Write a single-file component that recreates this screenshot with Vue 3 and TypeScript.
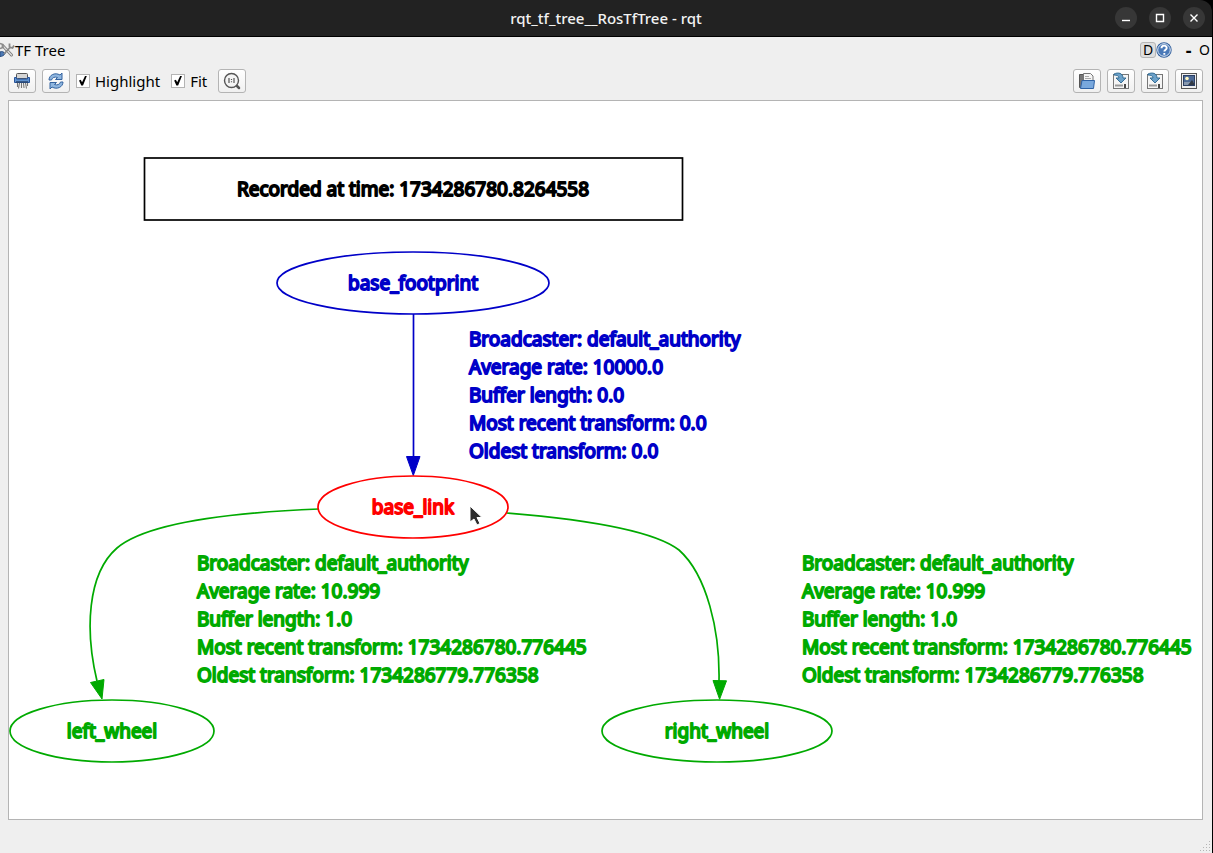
<script setup lang="ts">
import { ref } from 'vue'

interface Label { x: number; y: number; tone: string; lines: string[] }
interface TfNode { name: string; cx: number; cy: number; rx: number; tone: string }

const highlight = ref(true)
const fit = ref(true)

const nodes: TfNode[] = [
  { name: 'base_footprint', cx: 404, cy: 182, rx: 136, tone: 'blue' },
  { name: 'base_link', cx: 404, cy: 406, rx: 95, tone: 'red' },
  { name: 'left_wheel', cx: 103, cy: 630, rx: 102, tone: 'green' },
  { name: 'right_wheel', cx: 708, cy: 630, rx: 115, tone: 'green' },
]

const wheel = [
  'Broadcaster: default_authority',
  'Average rate: 10.999',
  'Buffer length: 1.0',
  'Most recent transform: 1734286780.776445',
  'Oldest transform: 1734286779.776358',
]

const labels: Label[] = [
  {
    x: 460, y: 245, tone: 'blue',
    lines: [
      'Broadcaster: default_authority',
      'Average rate: 10000.0',
      'Buffer length: 0.0',
      'Most recent transform: 0.0',
      'Oldest transform: 0.0',
    ],
  },
  { x: 188, y: 469, tone: 'green', lines: wheel },
  { x: 793, y: 469, tone: 'green', lines: wheel },
]
</script>

<template>
  <div class="window">
    <header class="titlebar">
      <span class="side"></span>
      <h1>rqt_tf_tree__RosTfTree - rqt</h1>
      <div class="side controls">
        <button aria-label="Minimize"><svg viewBox="0 0 22 22"><path d="M7 13.5h8" /></svg></button>
        <button aria-label="Maximize"><svg viewBox="0 0 22 22"><path d="M7.5 7.5h7v7h-7z" /></svg></button>
        <button aria-label="Close"><svg viewBox="0 0 22 22"><path d="M7.5 7.5l7 7M14.5 7.5l-7 7" /></svg></button>
      </div>
    </header>

    <div class="body">
      <div class="dock">
        <svg class="tools" width="15" height="18" viewBox="0 0 15 18" fill="none">
          <path d="M0 11c2-1 4 0 5 1.500c-1 2-3 3-5 3z" fill="#4c79b5" stroke="#2c4f80" />
          <path d="M3 5l8.500 9" stroke="#777" stroke-width="3" stroke-linecap="round" />
          <path d="M3 5l8.500 9" stroke="#ddd" stroke-width="1.300" stroke-linecap="round" />
          <path d="M10 6.500l-6 6.500M9.500 2.500v3.500l3 1 1.500-2.500" stroke="#888" stroke-width="1.800" />
          <path d="M0 2.500l3 1v3l-3 1" stroke="#888" stroke-width="1.500" />
        </svg>
        <span class="name">TF Tree</span>
        <button class="dbtn" aria-label="Dock options">D</button>
        <button class="flat" aria-label="Help">
          <svg width="16" height="16" viewBox="0 0 16 16">
            <circle cx="8" cy="8" r="7.700" fill="#2f5d9c" />
            <circle cx="8" cy="8" r="6.300" fill="#4a79b8" stroke="#dfe9f5" stroke-width="1" />
            <path d="M5.500 6.200c0-3.400 5.200-3.300 5.200-.3c0 1.700-2.400 1.800-2.400 3.700M8.300 11v1.800" fill="none" stroke="#fff" stroke-width="1.900" />
          </svg>
        </button>
        <button class="flat dash" aria-label="Minimize dock">-</button>
        <button class="flat" aria-label="Close dock">O</button>
      </div>

      <div class="toolbar">
        <button class="tool" aria-label="Clear buffer">
          <svg width="18" height="18" viewBox="0 0 18 18">
            <path d="M4.500 11v4M6.500 11l-1 5.500M8.500 11v5M10.500 11l.5 5M12.500 11l1 5.500M14.500 11v3" stroke="#777" stroke-width="1.100" />
            <rect x="3.500" y="1.500" width="11" height="5" rx="1" fill="#d5d5d5" stroke="#555" />
            <path d="M1.500 5.500h2v1.500h11V5.500h2v5h-15z" fill="#5f92cf" stroke="#28549a" />
            <path d="M3 10h12" stroke="#28456e" stroke-width="1.500" />
          </svg>
        </button>
        <button class="tool" aria-label="Refresh">
          <svg width="18" height="18" viewBox="0 0 18 18" stroke="#34639f" stroke-width="1" fill="#8fb6df">
            <path d="M2 8c0-5 6-8 11-5l2-2v6.500H8.500l2-2C8 4.500 5 5.500 4.500 8z" />
            <path d="M16 10c0 5-6 8-11 5l-2 2v-6.500h6.500l-2 2C10 13.500 13 12.500 13.500 10z" />
          </svg>
        </button>
        <label><input v-model="highlight" type="checkbox" />Highlight</label>
        <label><input v-model="fit" type="checkbox" />Fit</label>
        <button class="tool" aria-label="Fit in view">
          <svg width="18" height="18" viewBox="0 0 18 18" fill="none">
            <path d="M13.500 13.500l2.500 2.500" stroke="#555" stroke-width="2.500" stroke-linecap="round" />
            <circle cx="8.500" cy="8.500" r="7" fill="#f4f4f4" stroke="#555" stroke-width="1.400" />
            <path d="M6 6v5M11 6v5M8.500 7v1M8.500 9.300v1" stroke="#555" stroke-width="1.200" />
          </svg>
        </button>
        <span class="spacer"></span>
        <button class="tool" aria-label="Load dot graph">
          <svg width="18" height="18" viewBox="0 0 18 18">
            <path d="M1.500 2.500h5l1 1v12h-6z" fill="#777" stroke="#555" />
            <path d="M5.500 9V1.500h7l2.500 2.500v6z" fill="#f5f5f5" stroke="#777" />
            <path d="M7 4.500h4M7 6.500h6" stroke="#aaa" />
            <path d="M4 8.500h12.500l-1 8H2.500z" fill="#79a8dd" stroke="#2f62a5" />
          </svg>
        </button>
        <button v-for="kind in ['dot graph', 'SVG']" :key="kind" class="tool" :aria-label="`Save as ${kind}`">
          <svg width="18" height="18" viewBox="0 0 18 18">
            <rect x="1.500" y="2.500" width="15" height="14" fill="#f5f5f5" stroke="#777" />
            <path d="M3 13.500h8" stroke="#999" stroke-width="2" />
            <path d="M13 12v4" stroke="#111" stroke-width="1.500" />
            <path d="M2 2c4-2 9-1 9 4h3l-5 5-5-5h3c0-2-2-3-5-3z" fill="#6ba1c9" stroke="#2b658f" stroke-width=".9" />
          </svg>
        </button>
        <button class="tool" aria-label="Save as image">
          <svg width="18" height="18" viewBox="0 0 18 18">
            <rect x="1.500" y="1.500" width="15" height="15" fill="#eee" stroke="#555" />
            <rect x="3.500" y="3.500" width="11" height="10" fill="#4c6a96" stroke="#2c3f63" />
            <path d="M4 10h10v3H4z" fill="#8798ae" />
            <circle cx="7" cy="6.500" r="1.800" fill="#fff6c0" />
            <path d="M8 13l4-5 2 3v2z" fill="#333b45" />
          </svg>
        </button>
      </div>

      <main class="view">
        <svg class="graph" viewBox="0 0 1193 718" preserveAspectRatio="xMidYMid meet">
          <g class="black">
            <rect x="135.500" y="57" width="538" height="62" />
            <text x="404" y="95" text-anchor="middle">Recorded at time: 1734286780.8264558</text>
          </g>
          <g class="blue">
            <path d="M404.500 213V358" />
            <path class="head" d="M397.500 355.500h13.500l-6.700 19z" />
          </g>
          <g class="green">
            <path d="M310 408C236 411 141 419 108 447C78 473 76 530 88 580" />
            <path class="head" d="M81.500 581.500l13.500-3-2 19.500z" />
            <path d="M498 412C571 418 643 428 670 449C698 474 711 530 710 580" />
            <path class="head" d="M704 579.500l13.500.3-6.900 18.500z" />
          </g>
          <g v-for="n in nodes" :key="n.name" :class="n.tone">
            <ellipse :cx="n.cx" :cy="n.cy" :rx="n.rx" ry="31" />
            <text :x="n.cx" :y="n.cy + 7" text-anchor="middle">{{ n.name }}</text>
          </g>
          <g v-for="l in labels" :key="l.x" :class="l.tone">
            <text v-for="(line, i) in l.lines" :key="i" :x="l.x" :y="l.y + i * 28">{{ line }}</text>
          </g>
          <path class="pointer" d="M461 405v16l4-3 3 6 3-1.500-3-6h5z" />
        </svg>
      </main>
      <footer class="status">
        <svg width="12" height="12" viewBox="0 0 12 12" fill="#b5b5b5">
          <path d="M9 0h1v1H9zM6 3h1v1H6zM9 3h1v1H9zM3 6h1v1H3zM6 6h1v1H6zM9 6h1v1H9zM0 9h1v1H0zM3 9h1v1H3zM6 9h1v1H6zM9 9h1v1H9z" />
        </svg>
      </footer>
    </div>
  </div>
</template>

<style>
body { margin: 0; background: #000; }
</style>

<style scoped>
.window {
  display: flex; flex-direction: column; height: 100vh; box-sizing: border-box;
  padding-right: 1px; background: #000; color: #000;
  font: 15px/20px "Noto Sans", "Open Sans", sans-serif;
}
button { font: inherit; color: inherit; padding: 0; margin: 0; box-sizing: border-box; }
.titlebar {
  display: grid; grid-template-columns: 1fr auto 1fr; align-items: center; height: 36px; flex: none; margin-bottom: 1px;
  background: #222; color: #f2f2f2; border-top-right-radius: 12px;
}
.titlebar h1 { margin: 0; font-size: 15px; font-weight: 500; white-space: nowrap; }
.controls { display: flex; justify-content: flex-end; gap: 12px; padding-right: 7px; }
.controls button { width: 22px; height: 22px; border: 0; border-radius: 50%; background: #373737; }
.controls svg { display: block; fill: none; stroke: #fff; stroke-width: 1.4; }
.body { flex: 1; display: flex; flex-direction: column; min-height: 0; background: #efefef; }
.dock { display: flex; align-items: center; height: 26px; padding-right: 2px; flex: none; }
.name { flex: 1; }
.dbtn { width: 16px; height: 16px; border: 1px solid #b5b5b5; border-radius: 3px; background: #dedede; font-size: 14px; line-height: 14px; }
.flat { border: 0; background: none; display: block; font-size: 14px; }
.flat svg { display: block; }
.dash { width: 27px; padding-left: 6px; font-size: 18px; font-weight: 700; }
.toolbar { display: flex; align-items: center; gap: 6px; height: 35px; flex: none; padding: 0 9px 2px 8px; }
.tool {
  width: 28px; height: 24px; display: grid; place-items: center;
  border: 1px solid #b4b4b4; border-radius: 3px; background: linear-gradient(#fff, #f0f0f0);
}
.toolbar label { display: flex; align-items: center; gap: 5px; margin-right: 5px; }
input {
  appearance: none; width: 14px; height: 14px; margin: 0; border: 1px solid #b4b4b4; background: #fff;
  display: grid; place-items: center;
}
input:checked::before {
  content: ""; width: 8px; height: 10px; background: #000;
  clip-path: polygon(0 50%, 22% 42%, 38% 68%, 78% 0, 100% 0, 50% 100%, 28% 100%);
}
.spacer { flex: 1; }
.view { flex: 1; min-height: 0; margin: 0 9px 0 8px; border: 1px solid #b4b4b4; background: #fff; display: flex; }
.graph { width: 100%; height: 100%; display: block; }
.graph g { fill: none; stroke: currentColor; stroke-width: 1.7; }
.graph text { font-size: 19px; fill: currentColor; stroke-width: 1.8; stroke-linejoin: round; }
.graph .head { fill: currentColor; stroke-width: 1; }
.black { color: #000; }
.blue { color: #0000c8; }
.red { color: #f00; }
.green { color: #00aa00; }
.pointer { fill: #2c2c2c; stroke: #fff; stroke-width: 1; }
.status { height: 33px; flex: none; display: flex; align-items: flex-end; justify-content: flex-end; }
</style>
